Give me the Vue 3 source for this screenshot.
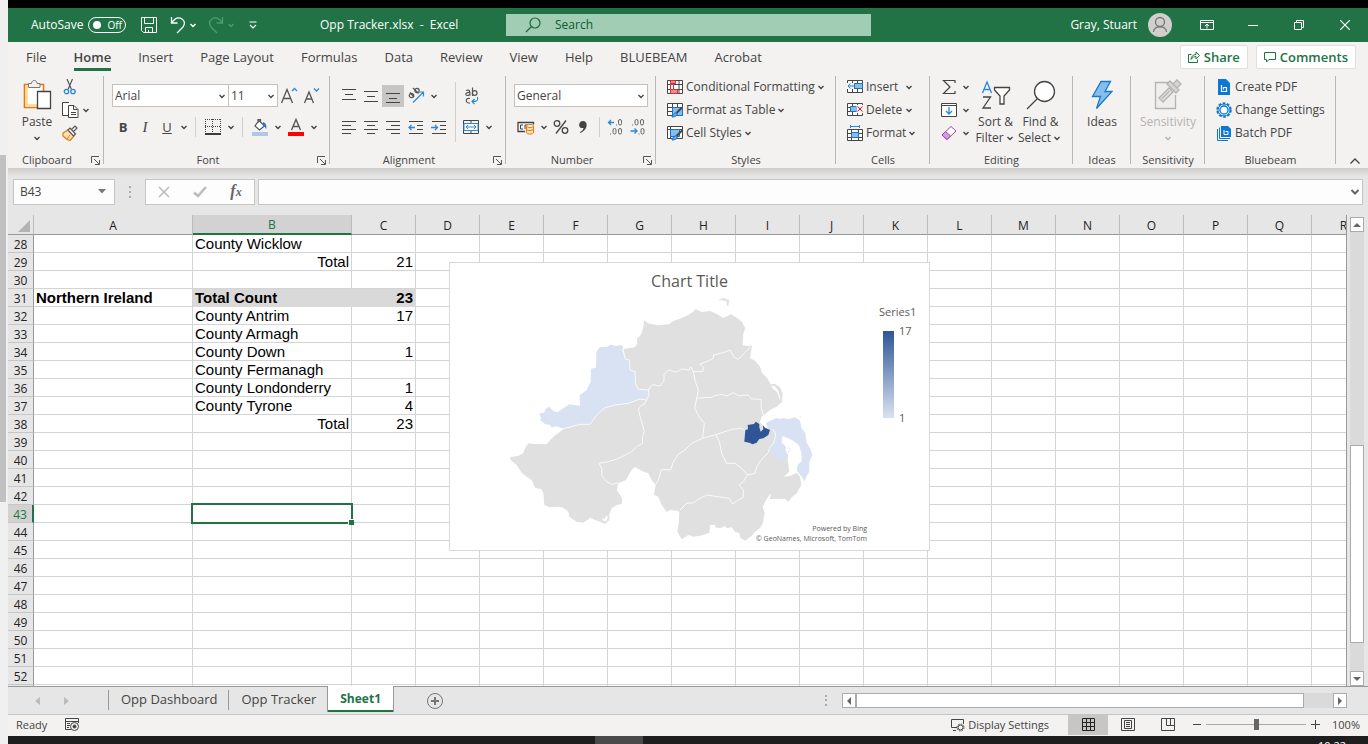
<script setup>
import { h } from 'vue'

const Chev = () =>
  h('svg', { class: 'chev', width: 12, height: 12, viewBox: '0 0 12 12', 'aria-hidden': 'true' }, [
    h('path', { d: 'M3.5 5l2.5 2.5L8.5 5', fill: 'none', stroke: 'currentColor', 'stroke-width': 1.4 })
  ])
const Launcher = () =>
  h('svg', { width: 9, height: 9, viewBox: '0 0 9 9', 'aria-hidden': 'true' }, [
    h('path', { d: 'M.5 7V.5H8M3 3l5 5M8.500 4v4.500H4', fill: 'none', stroke: '#555' })
  ])

const tabs = ['File', 'Home', 'Insert', 'Page Layout', 'Formulas', 'Data', 'Review', 'View', 'Help', 'BLUEBEAM', 'Acrobat']
const cols = 'ABCDEFGHIJKLMNOPQR'.split('')
const cells = {
  28: { B: 'County Wicklow' },
  29: { B: 'Total', C: '21' },
  31: { A: 'Northern Ireland', B: 'Total Count', C: '23' },
  32: { B: 'County Antrim', C: '17' },
  33: { B: 'County Armagh' },
  34: { B: 'County Down', C: '1' },
  35: { B: 'County Fermanagh' },
  36: { B: 'County Londonderry', C: '1' },
  37: { B: 'County Tyrone', C: '4' },
  38: { B: 'Total', C: '23' }
}
const rows = Array.from({ length: 25 }, (_, i) => i + 28)
const cellClass = (r, c) => ({
  bold: r === 31,
  fill: r === 31 && (c === 'B' || c === 'C'),
  right: c === 'C' || (c === 'B' && (r === 29 || r === 38)),
  active: r === 43 && c === 'B'
})
const alignIcons = [
  'M1 1.500h14M4 6.500h8M1 11.500h14',
  'M1 3.500h14M4 8.500h8M1 13.500h14',
  'M1 5.500h14M4 10.500h8M1 14.500h14'
]
const justIcons = [
  'M1 2.500h14M1 6.500h9M1 10.500h14M1 14.500h9',
  'M1 2.500h14M4 6.500h8M1 10.500h14M4 14.500h8',
  'M1 2.500h14M6 6.500h9M1 10.500h14M6 14.500h9'
]
</script>

<template>
  <div class="screen">
    <div class="edge"><div class="edge-thumb"></div></div>
    <div class="desktop">
      <div class="black"></div>
      <header class="title">
        <div class="quick">
          <label class="autosave">AutoSave
            <button class="toggle" type="button"><i></i>Off</button>
          </label>
          <button class="q save" type="button" aria-label="Save">
            <svg width="18" height="18" viewBox="0 0 18 18" fill="none" stroke="#fff"><path d="M1.500 1.500h15v15h-13l-2-2zM4.500 1.500v6h9v-6M5.500 16.500v-5h7v5M8.500 14v2.500" /></svg>
          </button>
          <button class="q" type="button" aria-label="Undo">
            <svg width="16" height="18" viewBox="0 0 16 18" fill="none" stroke="#fff" stroke-width="1.300"><path d="M1.500 1v6h6M1.500 7C5 2 9 1 12 3c3 2 3 5 1 8l-6 6" /></svg>
            <Chev />
          </button>
          <button class="q dim" type="button" aria-label="Redo">
            <svg width="16" height="18" viewBox="0 0 16 18" fill="none" stroke="#4f9a70" stroke-width="1.300"><path d="M14.500 1v6h-6M14.500 7C11 2 7 1 4 3c-3 2-3 5-1 8l6 6" /></svg>
            <Chev />
          </button>
          <button class="q" type="button" aria-label="Customize toolbar">
            <svg width="10" height="8" viewBox="0 0 10 8" fill="none" stroke="#fff" stroke-width="1.200"><path d="M1.500 1h7M2 4l3 3 3-3" /></svg>
          </button>
        </div>
        <div class="doc">Opp Tracker.xlsx&nbsp; - &nbsp;Excel</div>
        <label class="search">
          <svg width="16" height="16" viewBox="0 0 16 16" fill="none" stroke="#1a6a3c" stroke-width="1.200"><circle cx="10" cy="6" r="5" /><path d="M6.500 9.500L1 15" /></svg>
          <input type="text" placeholder="Search" aria-label="Search" />
        </label>
        <div class="user">
          <span>Gray, Stuart</span>
          <svg class="avatar" width="24" height="24" viewBox="0 0 24 24"><circle cx="12" cy="12" r="12" fill="#d0cfce" /><g fill="none" stroke="#777" stroke-width="1.300"><circle cx="12" cy="9" r="4.500" /><path d="M5.500 19c0-7 13-7 13 0" /></g></svg>
          <button class="win" type="button" aria-label="Ribbon display options"><svg width="14" height="12" viewBox="0 0 14 12" fill="none" stroke="#fff"><path d="M.5 1.500h13v9H.5zM.5 3.500h13M7 9.500V5M5 7l2-2 2 2" /></svg></button>
          <button class="win" type="button" aria-label="Minimize"><svg width="10" height="10" viewBox="0 0 10 10" stroke="#fff"><path d="M0 5.500h10" /></svg></button>
          <button class="win" type="button" aria-label="Restore"><svg width="10" height="10" viewBox="0 0 10 10" fill="none" stroke="#fff"><path d="M.5 2.500h7v7h-7zM2.500 2.500v-2h7v7h-2" /></svg></button>
          <button class="win" type="button" aria-label="Close"><svg width="10" height="10" viewBox="0 0 10 10" stroke="#fff" stroke-width="1.200"><path d="M0 0l10 10M10 0L0 10" /></svg></button>
        </div>
      </header>

      <nav class="tabs">
        <a v-for="t in tabs" :key="t" href="#" :class="{ on: t === 'Home' }">{{ t }}</a>
        <div class="tab-actions">
          <button type="button"><svg width="12" height="12" viewBox="0 0 12 12" fill="none" stroke="#217346"><path d="M3.500 3.500h-3v8h9v-3M3 8.500c0-3 2-5 5-5v-2.500l3.500 3.500L8 8V5.500c-2 0-4 1-5 3z" /></svg>Share</button>
          <button type="button"><svg width="12" height="12" viewBox="0 0 12 12" fill="none" stroke="#217346"><path d="M.5 1.500h11v7H5l-2.500 2.500V8.500h-2z" /></svg>Comments</button>
        </div>
      </nav>

      <div class="ribbon">
        <section class="group g-clip">
          <div class="body">
            <button class="big" type="button">
              <span class="ico"><svg width="30" height="32" viewBox="0 0 30 32" fill="none"><path d="M2.500 5.500h19v23h-19z" fill="#fff" stroke="#e07a10" stroke-width="1.600" /><path d="M4.500 7v19.500H15" stroke="#f8d990" stroke-width="2.500" /><path d="M6.500 8.500v-4h3c0-4 5.500-4 5.500 0h3v4z" fill="#f3f2f1" stroke="#777" /><path d="M15.500 12.500h13v17h-13z" fill="#fff" stroke="#444" stroke-width="1.300" /></svg></span>
              <span>Paste</span><span><Chev /></span>
            </button>
            <div class="stack">
              <button type="button" aria-label="Cut"><svg width="16" height="16" viewBox="0 0 16 16" fill="none"><path d="M5 0l4.500 10.500M10.500 0L6 10.500" stroke="#555" stroke-width="1.200" /><circle cx="4.500" cy="12.500" r="2.200" stroke="#2b88d8" stroke-width="1.300" /><circle cx="11" cy="12.500" r="2.200" stroke="#2b88d8" stroke-width="1.300" /></svg></button>
              <button type="button" aria-label="Copy"><svg width="18" height="16" viewBox="0 0 18 16" fill="#fff" stroke="#444"><path d="M7 .5H.5v13H6" /><path d="M6.500 3.500h5.500l4 4v8h-9.500zM11.500 3.500v4h4M9 10.500h5M9 12.500h5" /></svg><Chev /></button>
              <button type="button" aria-label="Format painter"><svg width="16" height="16" viewBox="0 0 16 16" fill="none"><path d="M1 8l5-3 6 6-4 4.500-3-1-4-3.500z" fill="#fbe0b4" stroke="#e07a10" stroke-width="1.200" /><path d="M5 14l3-4" stroke="#e07a10" /><path d="M6 5l2-2 5.500 6-2 2zM9.500 4.500L13 1l2 2-3.500 3.500" fill="#fff" stroke="#555" stroke-width="1.200" /></svg></button>
            </div>
          </div>
          <footer><span>Clipboard</span><button type="button" aria-label="Clipboard settings"><Launcher /></button></footer>
        </section>

        <section class="group g-font">
          <div class="body rows">
            <div class="row">
              <div class="combo face"><input type="text" value="Arial" aria-label="Font" /><Chev /></div>
              <div class="combo size"><input type="text" value="11" aria-label="Font size" /><Chev /></div>
              <button class="b" type="button" aria-label="Increase font size"><svg width="18" height="18" viewBox="0 0 18 18" fill="none" stroke="#555" stroke-width="1.300"><path d="M1.500 16L7 2.500 12.500 16M3.500 11.500h7" /><path d="M12 4l2.500-2.500L17 4" stroke="#2b88d8" /></svg></button>
              <button class="b" type="button" aria-label="Decrease font size"><svg width="18" height="18" viewBox="0 0 18 18" fill="none" stroke="#555" stroke-width="1.300"><path d="M2.500 16L7 5l4.500 11M4 12h6" /><path d="M12 1.500L14.500 4 17 1.500" stroke="#2b88d8" /></svg></button>
            </div>
            <div class="row">
              <button class="b strong" type="button">B</button>
              <button class="b ital" type="button">I</button>
              <button class="b under" type="button">U</button><Chev />
              <i class="sep"></i>
              <button class="b wide" type="button" aria-label="Borders"><svg width="16" height="16" viewBox="0 0 16 16" fill="none" stroke="#444"><path d="M.5 0v14M15.500 0v14M7.500 0v14M0 .5h16M0 7.500h16" stroke-dasharray="1 1" /><path d="M0 15h16" stroke-width="1.500" stroke="#000" /></svg></button><Chev />
              <i class="sep"></i>
              <button class="b wide" type="button" aria-label="Fill color"><svg width="16" height="18" viewBox="0 0 16 18" fill="none"><path d="M7 2.500l5.500 5.500L7.500 12 3 8zM6 5V1.500h2.500V5" fill="#fff" stroke="#555" stroke-width="1.200" /><path d="M11 4c3 1 4 4 3 7-1-1-1-3-3-4z" fill="#2b78c8" /><path d="M0 14h16v4H0z" fill="#b4c6e7" /></svg></button><Chev />
              <button class="b wide" type="button" aria-label="Font color"><svg width="16" height="18" viewBox="0 0 16 18" fill="none"><path d="M3.500 12L8 1.500 12.500 12M5 8.500h6" stroke="#555" stroke-width="1.400" /><path d="M0 14h16v4H0z" fill="#f00" /></svg></button><Chev />
            </div>
          </div>
          <footer><span>Font</span><button type="button" aria-label="Font settings"><Launcher /></button></footer>
        </section>

        <section class="group g-align">
          <div class="body">
            <div class="rows">
              <div class="row">
                <button v-for="(d, i) in alignIcons" :key="d" class="b" :class="{ pressed: i === 2 }" type="button" aria-label="Vertical align"><svg width="16" height="16" viewBox="0 0 16 16" stroke="#444" fill="none"><path :d="d" /></svg></button>
                <button class="b wide" type="button" aria-label="Orientation"><svg width="18" height="18" viewBox="0 0 18 18" fill="none" stroke="#555" stroke-width="1.200"><circle cx="4.500" cy="8.500" r="2.200" /><path d="M3 5.500l4 4.500M6 1l5.500 5.500" /><circle cx="10" cy="3.500" r="2.200" /><path d="M6 15.500L16 5.500M12 5h4.500v4.500" stroke="#2b88d8" /></svg></button><Chev />
              </div>
              <div class="row">
                <button v-for="d in justIcons" :key="d" class="b" type="button" aria-label="Align"><svg width="16" height="16" viewBox="0 0 16 16" stroke="#444" fill="none"><path :d="d" /></svg></button>
                <button class="b wide" type="button" aria-label="Decrease indent"><svg width="16" height="16" viewBox="0 0 16 16" fill="none" stroke="#444"><path d="M1 2.500h14M9 6.500h6M9 10.500h6M1 14.500h14" /><path d="M7 8.500H1M3.500 6L1 8.500 3.500 11" stroke="#2b88d8" stroke-width="1.300" /></svg></button>
                <button class="b" type="button" aria-label="Increase indent"><svg width="16" height="16" viewBox="0 0 16 16" fill="none" stroke="#444"><path d="M1 2.500h14M9 6.500h6M9 10.500h6M1 14.500h14" /><path d="M0 8.500h6M4 6l2.500 2.500L4 11" stroke="#2b88d8" stroke-width="1.300" /></svg></button>
              </div>
            </div>
            <i class="tall"></i>
            <div class="rows">
              <div class="row">
                <button class="b wide" type="button" aria-label="Wrap text"><svg width="16" height="18" viewBox="0 0 16 18" fill="none" stroke="#555" stroke-width="1.200"><path d="M3 3.500c4-1.500 4 .5 4 5M7 5.500c-5-.5-5 3-2.500 3C6 8.500 7 7.500 7 6" /><path d="M9.500 .5v8.500" /><circle cx="11.700" cy="6" r="2.300" /><path d="M7 11.500c-5-1-5 5 0 4.500" /><path d="M14.500 10c1 4-1 4.500-5.500 4.500M11.500 12L9 14.500l2.500 2.500" stroke="#2b88d8" /></svg></button>
              </div>
              <div class="row">
                <button class="b wide" type="button" aria-label="Merge"><svg width="16" height="16" viewBox="0 0 16 16" fill="none" stroke="#444"><path d="M.5 1.500h15v13H.5zM8 1.500v3M8 11.500v3" /><path d="M1 4.500h14v7H1z" fill="#fff" stroke="#2b88d8" /><path d="M3 8h10M5 6L3 8l2 2M11 6l2 2-2 2" stroke="#2b88d8" /></svg></button><Chev />
              </div>
            </div>
          </div>
          <footer><span>Alignment</span><button type="button" aria-label="Alignment settings"><Launcher /></button></footer>
        </section>

        <section class="group g-num">
          <div class="body rows">
            <div class="row"><div class="combo fmt"><input type="text" value="General" aria-label="Number format" /><Chev /></div></div>
            <div class="row">
              <button class="b wide" type="button" aria-label="Accounting format"><svg width="18" height="16" viewBox="0 0 18 16" fill="none" stroke="#444"><path d="M8 12.500H1v-9h15.500v2" stroke-width="1.300" /><path d="M6 6H3.500v4H6M8 10V6h3" /><path d="M9.500 7v6.500c0 2 7 2 7 0V7" fill="#fbe0b4" stroke="#e07a10" /><ellipse cx="13" cy="7" rx="3.500" ry="1.500" fill="#fff" stroke="#e07a10" /><path d="M9.500 10c0 2 7 2 7 0" stroke="#e07a10" /></svg></button><Chev />
              <button class="b" type="button" aria-label="Percent"><svg width="16" height="16" viewBox="0 0 16 16" fill="none" stroke="#444" stroke-width="1.300"><circle cx="4" cy="4.500" r="2.800" /><circle cx="12" cy="11.500" r="2.800" /><path d="M13 1.500L3 14.500" /></svg></button>
              <button class="b" type="button" aria-label="Comma style"><svg width="10" height="14" viewBox="0 0 10 14"><path d="M5 1c5 0 5.500 8-2.500 12l-.5-1c2-1 3.500-2.500 3.500-4C-.5 9 0 1 5 1z" fill="#444" /></svg></button>
              <i class="sep"></i>
              <button class="b" type="button" aria-label="Increase decimal"><svg width="18" height="18" viewBox="0 0 18 18" fill="none" stroke="#666"><path d="M7 4.500H1.500M4 2L1.500 4.500 4 7" stroke="#2b88d8" stroke-width="1.300" /><path d="M9 7h1M3 16h1" /><rect x="11.500" y="1.500" width="3" height="5.500" rx="1.500" /><rect x="6" y="10.500" width="3" height="5.500" rx="1.500" /><rect x="11.500" y="10.500" width="3" height="5.500" rx="1.500" /></svg></button>
              <button class="b" type="button" aria-label="Decrease decimal"><svg width="18" height="18" viewBox="0 0 18 18" fill="none" stroke="#666"><path d="M1.500 13H8M5.500 10.500L8 13l-2.500 2.500" stroke="#2b88d8" stroke-width="1.300" /><path d="M3 7h1M9.500 16h1" /><rect x="6" y="1.500" width="3" height="5.500" rx="1.500" /><rect x="11.500" y="1.500" width="3" height="5.500" rx="1.500" /><rect x="12" y="10.500" width="3" height="5.500" rx="1.500" /></svg></button>
            </div>
          </div>
          <footer><span>Number</span><button type="button" aria-label="Number settings"><Launcher /></button></footer>
        </section>

        <section class="group g-styles">
          <div class="body pad">
            <div class="stack">
              <button type="button"><svg width="16" height="16" viewBox="0 0 16 16" fill="#fff" stroke="#444"><path d="M.5 1.500h15v13H.5zM.5 5.500h15M.5 10.500h15M4 1.500v13M12 1.500v13" /><path d="M3.500 1.500h5v3h-5zM3.500 10.500h7v4h-7z" fill="#f6878c" stroke="#d13438" /><path d="M3.500 5.500h3v5h-3z" fill="#fff" stroke="#d13438" /></svg>Conditional Formatting<Chev /></button>
              <button type="button"><svg width="16" height="16" viewBox="0 0 16 16" fill="#fff" stroke="#444"><path d="M.5 1.500h15v12H.5zM.5 5.500h15M.5 9.500h15M5.500 1.500v12M10.500 1.500v12" /><path d="M5.500 5.500h10v8h-10z" fill="#83beec" stroke="#1e6fbf" /><path d="M15 5.500L9.500 11" stroke-width="2" /><path d="M5 15c1-3 3-5 5-4 1 2-1 4-5 4z" fill="#5ba7e6" stroke="#1e6fbf" /></svg>Format as Table<Chev /></button>
              <button type="button"><svg width="16" height="16" viewBox="0 0 16 16" fill="#fff" stroke="#444"><path d="M.5 1.500h15v12H.5zM.5 4.500h15M3.500 1.500v12" /><path d="M3.500 4.500h9v7h-9z" fill="#83beec" stroke="#1e6fbf" /><path d="M15 5.500L9.500 11" stroke-width="2" /><path d="M5 15c1-3 3-5 5-4 1 2-1 4-5 4z" fill="#5ba7e6" stroke="#1e6fbf" /></svg>Cell Styles<Chev /></button>
            </div>
          </div>
          <footer><span>Styles</span></footer>
        </section>

        <section class="group g-cells">
          <div class="body pad">
            <div class="stack">
              <button type="button"><svg width="16" height="16" viewBox="0 0 16 16" fill="#fff" stroke="#444"><path d="M.5 1.500h15v12H.5zM.5 5.500h15M.5 9.500h15M5.500 1.500v12M10.500 1.500v12" /><path d="M7.500 4.500h8v5h-8z" fill="#83beec" stroke="#1e6fbf" /><path d="M0 4h7v6H0z" fill="#f3f2f1" stroke="none" /><path d="M7 7H1M3.500 4.500L1 7l2.500 2.500" stroke="#2b88d8" fill="none" /></svg><span>Insert</span><Chev /></button>
              <button type="button"><svg width="16" height="16" viewBox="0 0 16 16" fill="#fff" stroke="#444"><path d="M.5 1.500h15v12H.5zM.5 5.500h15M.5 9.500h15M5.500 1.500v12M10.500 1.500v12" /><path d="M3.500 4.500h6v5h-6z" fill="#83beec" stroke="#1e6fbf" /><path d="M9.500 3H16v8H9.500z" fill="#f3f2f1" stroke="none" /><path d="M10.500 4.500l5 5M15.500 4.500l-5 5" stroke="#e81123" fill="none" /></svg><span>Delete</span><Chev /></button>
              <button type="button"><svg width="16" height="16" viewBox="0 0 16 16" fill="#fff" stroke="#444"><path d="M.5 4.500h15v11H.5zM.5 8.500h15M.5 12.500h15M4.500 4.500v11M11.500 4.500v11" /><path d="M4.500 7.500h7v5h-7z" fill="#83beec" stroke="#1e6fbf" /><path d="M3.500 1.500h9M3.500 0v3M12.500 0v3" stroke="#2b88d8" /></svg><span>Format</span><Chev /></button>
            </div>
          </div>
          <footer><span>Cells</span></footer>
        </section>

        <section class="group g-edit">
          <div class="body pad">
            <div class="stack tools">
              <button type="button" aria-label="Sum"><svg width="16" height="16" viewBox="0 0 16 16" fill="none" stroke="#444" stroke-width="1.200"><path d="M14 4V1.500H2.500L9 8l-6.500 6.500H14V12" /></svg><Chev /></button>
              <button type="button" aria-label="Fill"><svg width="16" height="16" viewBox="0 0 16 16" fill="#fff" stroke="#444"><path d="M.5 1.500h15v13H.5zM.5 3.500h15" /><path d="M8 5v7M5 9l3 3 3-3" stroke="#2b88d8" stroke-width="1.300" fill="none" /></svg><Chev /></button>
              <button type="button" aria-label="Clear"><svg width="16" height="16" viewBox="0 0 16 16" fill="#fff" stroke="#a33fb0"><path d="M1 10L10 1.500l5 4.500-9 8.500z" /><path d="M1 10l3.500-3.500 5 4.500L6 14.500z" fill="#d59ddc" /></svg><Chev /></button>
            </div>
            <button class="big mid" type="button">
              <span class="ico"><svg width="30" height="30" viewBox="0 0 30 30" fill="none" stroke="#444" stroke-width="1.300"><path d="M1.500 13L6 2l4.500 11M3 9.500h6" stroke="#2b88d8" /><path d="M2 17h7.500L2 28h8" /><path d="M13.500 7.500h15v2.500L23 16v8h-4v-8l-5.500-6z" fill="#fff" /></svg></span>
              <span>Sort &amp;</span><span>Filter<Chev /></span>
            </button>
            <button class="big mid" type="button">
              <span class="ico"><svg width="30" height="30" viewBox="0 0 30 30" fill="#fff" stroke="#444" stroke-width="1.300"><circle cx="18.500" cy="11.500" r="10" /><path d="M11.500 18.500L1 29" /></svg></span>
              <span>Find &amp;</span><span>Select<Chev /></span>
            </button>
          </div>
          <footer><span>Editing</span></footer>
        </section>

        <section class="group g-ideas">
          <div class="body center">
            <button class="big" type="button"><span class="ico"><svg width="22" height="30" viewBox="0 0 22 30"><path d="M10 1.500h9.500L14 11.500h7L5.500 28.500 9.500 16.500h-8z" fill="#83beec" stroke="#1e78c8" stroke-width="1.300" /></svg></span><span>Ideas</span></button>
          </div>
          <footer><span>Ideas</span></footer>
        </section>

        <section class="group g-sens">
          <div class="body center">
            <button class="big off" type="button" disabled><span class="ico"><svg width="28" height="32" viewBox="0 0 28 32" fill="none" stroke="#b5b3b1" stroke-width="1.300"><path d="M16 3.500H1.500v26h20V16" fill="#efeeee" /><path d="M5 19l10-10 4 4L9 23zM8 19.500l7.500-7.500" fill="#e1e0df" /><path d="M13 5l3-3 9 9-3 3zM19 5l4-4 4 4-4 4" fill="#d5d4d3" /></svg></span><span>Sensitivity</span><span><Chev /></span></button>
          </div>
          <footer><span>Sensitivity</span></footer>
        </section>

        <section class="group g-blue">
          <div class="body pad">
            <div class="stack">
              <button type="button"><svg width="16" height="16" viewBox="0 0 16 16"><path d="M2 0h8l4 4v12H2z" fill="#0a78d4" /><path d="M5.500 6v6.500h5V8.500h-3v2" fill="none" stroke="#fff" stroke-width="1.200" /></svg>Create PDF</button>
              <button type="button"><svg width="16" height="16" viewBox="0 0 16 16" fill="none" stroke="#0a78d4"><circle cx="8" cy="8" r="6.500" stroke-width="2.500" stroke-dasharray="2.600 1.480" /><circle cx="8" cy="8" r="6" fill="#d6eafa" /><circle cx="8" cy="8" r="4" fill="#fff" stroke-width="1.300" /></svg>Change Settings</button>
              <button type="button"><svg width="16" height="16" viewBox="0 0 16 16"><path d="M5 1h7l3 3v8H5z" fill="#0a78d4" /><path d="M1.500 4v11.500H12M3.500 2.500v11H14" fill="none" stroke="#0a78d4" /><path d="M8 5v4.500h4V6.500H9.500" fill="none" stroke="#fff" /></svg>Batch PDF</button>
            </div>
          </div>
          <footer><span>Bluebeam</span></footer>
        </section>
        <button class="collapse" type="button" aria-label="Collapse ribbon"><svg width="12" height="8" viewBox="0 0 12 8" fill="none" stroke="#444" stroke-width="1.300"><path d="M1.500 6.500L6 2l4.500 4.500" /></svg></button>
      </div>

      <div class="formula">
        <div class="namebox"><input type="text" value="B43" aria-label="Name box" /><svg width="8" height="5" viewBox="0 0 8 5"><path d="M0 0h8L4 4.500z" fill="#777" /></svg></div>
        <svg class="dots" width="2" height="12" viewBox="0 0 2 12" fill="#a8a8a8"><path d="M0 0h2v2H0zM0 5h2v2H0zM0 10h2v2H0z" /></svg>
        <div class="fx">
          <button type="button" aria-label="Cancel"><svg width="12" height="12" viewBox="0 0 12 12" stroke="#bbb" stroke-width="1.500"><path d="M1 1l10 10M11 1L1 11" /></svg></button>
          <button type="button" aria-label="Enter"><svg width="14" height="12" viewBox="0 0 14 12" fill="none" stroke="#bbb" stroke-width="2.500"><path d="M1 6.500L5 10l8-9" /></svg></button>
          <button class="fn" type="button">f<small>x</small></button>
        </div>
        <div class="finput"><input type="text" aria-label="Formula" /><svg width="8" height="6" viewBox="0 0 8 6" fill="none" stroke="#666" stroke-width="2"><path d="M.5 1L4 4.500 7.500 1" /></svg></div>
      </div>

      <div class="work">
        <div class="sheet">
          <table>
            <colgroup><col class="c-num" /><col class="c-wide" /><col class="c-wide" /><col v-for="n in 16" :key="n" class="c-std" /></colgroup>
            <thead>
              <tr>
                <th class="corner"><svg width="12" height="12" viewBox="0 0 12 12"><path d="M12 0v12H0z" fill="#b4b4b4" /></svg></th>
                <th v-for="c in cols" :key="c" :class="{ sel: c === 'B' }">{{ c }}</th>
              </tr>
            </thead>
            <tbody>
              <tr v-for="r in rows" :key="r">
                <th :class="{ sel: r === 43 }">{{ r }}</th>
                <td v-for="c in cols" :key="c" :class="cellClass(r, c)">{{ cells[r]?.[c] }}</td>
              </tr>
              <tr><th></th><td v-for="c in cols" :key="c"></td></tr>
            </tbody>
          </table>
          <figure class="chart">
            <figcaption>Chart Title</figcaption>
            <svg class="map" width="330" height="252" viewBox="0 0 990 756">
              <path d="M654 31L662 27 672 24 680 28 688 29 685 48 680 46 680 34 668 31z" fill="#e0e0e0" />
              <path d="M370 177L405 172 412 160 411 145 420 138 425 130 430 110 432 91 445 100 470 106 507 103 520 93 545 84 560 77 575 68 587 58 605 66 630 63 650 72 670 84 693 73 708 82 726 95 736 115 730 130 728 165 742 168 756 167 750 205 765 212 780 230 787 250 802 265 812 283 825 281 840 292 848 310 846 335 830 350 810 360 785 380 780 395 790 415 820 418 840 460 862 500 868 545 852 560 870 558 890 548 900 560 904 585 890 610 875 622 865 636 855 626 810 627 812 610 798 630 788 650 794 670 788 700 780 715 765 725 755 738 735 752 720 742 718 730 705 725 695 712 680 715 675 708 660 715 645 712 645 705 630 705 628 728 610 735 595 738 580 740 565 735 545 748 532 725 536 700 538 665 530 662 510 660 500 666 485 645 475 620 462 615 467 585 455 570 445 550 425 542 405 531 395 540 378 570 355 580 350 600 360 615 367 628 365 642 350 645 335 655 328 672 328 690 315 702 300 695 285 690 270 683 262 690 250 698 230 695 208 680 205 665 190 653 175 650 150 652 133 645 130 610 125 598 105 593 95 570 80 560 65 548 50 525 32 510 30 502 55 497 70 490 75 475 85 460 100 462 140 462 160 440 190 418 270 380 400 300z" fill="#e0e0e0" />
              <path d="M815 288L825 290 835 305 840 328 832 305 820 297z" fill="#fff" stroke="#fff" stroke-width="2" />
              <path d="M321 675l-8 12-8-2 6 8h8l4-10z" fill="#fff" />
              <path d="M370 168L360 165 350 168 330 164 322 170 300 171 289 187 288 233 273 236 272 275 260 300 239 316 240 347 208 343 190 355 172 367 160 363 147 350 137 357 132 368 118 370 123 384 120 390 135 402 150 405 154 412 170 409 190 416 240 403 270 403 290 375 315 353 345 345 385 340 420 327 440 330 447 315 445 300 415 298 407 280 405 245 390 240 388 210 376 207 367 180z" fill="#d9e2f3" />
              <path d="M798 400L810 392 830 384 840 387 850 384 865 388 885 382 900 392 904 412 916 430 920 458 930 475 937 495 928 517 928 545 920 558 913 575 905 560 890 541 893 525 905 513 904 490 897 466 880 452 848 437 845 458 858 470 856 480 865 497 860 508 842 510 825 500 808 488 808 475 820 460 827 435 820 418 805 418z" fill="#d9e2f3" />
              <path d="M860 474L868 474 871 482 864 486M899 379l6 5" fill="none" stroke="#d9e2f3" stroke-width="2" />
              <g fill="none" stroke="#fafafa" stroke-width="3" stroke-linejoin="round">
                <path d="M190 416L240 403 270 403 290 375 315 353 345 345 385 340 420 327 440 330 447 315 445 300M368 180L376 207 388 210 390 240 405 245 407 280 415 298 445 300 457 284 480 288 492 272 492 254 505 240 530 246 545 237 568 240 572 230 580 245 608 245 610 232 600 222 625 213 640 205 640 195 670 188 690 180 702 202 715 208 752 170" />
                <path d="M580 245L586 275 595 300 590 325 584 355 600 385 613 400 608 445M590 325L620 322 635 323 645 317 665 313 680 318 700 308 715 317 745 315 755 327 783 328 784 355 790 375" />
                <path d="M440 330L435 340 420 350 415 360 422 385 433 425 427 440 428 460 410 470 395 485 370 498 350 507 325 515 297 520 305 535 305 557 320 575 335 583 355 578" />
                <path d="M467 582L475 570 485 538 512 540 520 515 535 493 555 480 575 460 608 445 648 434 695 418 725 415 735 422" />
                <path d="M648 435L658 455 665 490 680 520 705 520 725 535 742 555 765 550 770 530 785 508 805 488 808 475 820 460 827 435 820 418M742 555L730 575 717 585 730 600 730 622 715 630 698 642 688 625 640 618 620 615 600 625 580 638 560 640 540 660" />
              </g>
              <path d="M733 455L736 420 744 418 743 405 762 402 767 395 778 402 778 412 782 425 790 418 788 405 795 413 810 420 805 435 790 445 778 447 770 458 758 463 748 458z" fill="#2f5597" />
            </svg>
            <div class="legend"><span>Series1</span><div class="ramp"><i></i><div><span>17</span><span>1</span></div></div></div>
            <p>Powered by Bing<br />© GeoNames, Microsoft, TomTom</p>
          </figure>
        </div>
        <div class="vbar">
          <button type="button" aria-label="Scroll up"><svg width="8" height="4" viewBox="0 0 8 4"><path d="M0 4h8L4 0z" fill="#666" /></svg></button>
          <div class="vtrack"><i></i></div>
          <button type="button" aria-label="Scroll down"><svg width="8" height="4" viewBox="0 0 8 4"><path d="M0 0h8L4 4z" fill="#666" /></svg></button>
        </div>
      </div>

      <div class="sheets">
        <div class="arrows">
          <svg width="5" height="8" viewBox="0 0 5 8"><path d="M5 0v8L0 4z" fill="#bbb" /></svg>
          <svg width="5" height="8" viewBox="0 0 5 8"><path d="M0 0v8l5-4z" fill="#bbb" /></svg>
        </div>
        <button class="stab" type="button">Opp Dashboard</button>
        <button class="stab" type="button">Opp Tracker</button>
        <button class="stab cur" type="button">Sheet1</button>
        <button class="add" type="button" aria-label="New sheet"><svg width="16" height="16" viewBox="0 0 16 16" fill="none" stroke="#777"><circle cx="8" cy="8" r="7.500" /><path d="M4 8h8M8 4v8" stroke-width="2" /></svg></button>
        <div class="hbar">
          <svg class="hdots" width="2" height="11" viewBox="0 0 2 11" fill="#aaa"><path d="M0 0h2v2H0zM0 4h2v2H0zM0 9h2v2H0z" /></svg>
          <button type="button" aria-label="Scroll left"><svg width="4" height="8" viewBox="0 0 4 8"><path d="M4 0v8L0 4z" fill="#666" /></svg></button>
          <div class="htrack"><i></i></div>
          <button type="button" aria-label="Scroll right"><svg width="4" height="8" viewBox="0 0 4 8"><path d="M0 0v8l4-4z" fill="#666" /></svg></button>
        </div>
      </div>

      <div class="status">
        <span>Ready</span>
        <svg width="15" height="14" viewBox="0 0 15 14" fill="none" stroke="#444"><path d="M6 11.500H.5V.5h13V5M.5 3.500h13M2 5.500h3M2 7.500h3M2 9.500h2" /><circle cx="9.500" cy="8.500" r="4" /><circle cx="9.500" cy="8.500" r="1.500" fill="#444" /></svg>
        <div class="views">
          <button class="disp" type="button"><svg width="14" height="14" viewBox="0 0 14 14" fill="none" stroke="#444"><path d="M6 9.500H.5v-8h12V6M2 12.500h3" /><circle cx="9.500" cy="9.500" r="2.500" /><circle cx="9.500" cy="9.500" r="3.500" stroke-dasharray="1.500 1.250" /></svg>Display Settings</button>
          <button class="v pressed" type="button" aria-label="Normal"><svg width="13" height="13" viewBox="0 0 13 13" fill="none" stroke="#222"><path d="M.5 .5h12v12H.5zM.5 4.500h12M.5 8.500h12M4.500 .5v12M8.500 .5v12" /></svg></button>
          <button class="v" type="button" aria-label="Page layout"><svg width="14" height="13" viewBox="0 0 14 13" fill="none" stroke="#444"><path d="M.5 .5h13v12H.5zM3.500 2.500h7v8h-7zM5 4.500h4M5 6.500h4M5 8.500h4" /></svg></button>
          <button class="v" type="button" aria-label="Page break preview"><svg width="14" height="13" viewBox="0 0 14 13" fill="none" stroke="#444"><path d="M.5 .5h13v12H.5zM5.500 .5v7h8M9.500 .5v7" /></svg></button>
          <button class="z" type="button" aria-label="Zoom out"><svg width="8" height="9" viewBox="0 0 8 9" stroke="#444"><path d="M0 4.500h8" /></svg></button>
          <input type="range" min="0" max="100" value="50" aria-label="Zoom" />
          <button class="z" type="button" aria-label="Zoom in"><svg width="9" height="9" viewBox="0 0 9 9" stroke="#444"><path d="M0 4.500h9M4.500 0v9" /></svg></button>
          <span class="pct">100%</span>
        </div>
      </div>
      <div class="taskbar"><i></i><span>10:22</span></div>
    </div>
  </div>
</template>

<style>
html, body { margin: 0; overflow: hidden; }
</style>

<style scoped>
.screen, .screen * { box-sizing: border-box; }
.screen { display: flex; height: 100vh; background: #f0f0f0; color: #444; font: 12px/16px "Open Sans", "Noto Sans", sans-serif; overflow: hidden; }
svg { display: block; flex: none; }
button { border: 0; padding: 0; margin: 0; background: none; font: inherit; color: inherit; }
input { border: 0; padding: 0; margin: 0; background: none; font: inherit; color: inherit; min-width: 0; outline: 0; }
.edge { width: 8px; flex: none; padding-top: 155px; }
.edge-thumb { width: 6px; height: 347px; background: #c1c1c1; }
.desktop { flex: 1; min-width: 0; display: flex; flex-direction: column; }
.black { height: 8px; background: #000; flex: none; }

.title { display: grid; grid-template-columns: 312px 186px minmax(120px, 365px) 1fr; align-items: center; height: 34px; flex: none; background: #217346; color: #fff; }
.quick { display: flex; align-items: center; padding-left: 23px; }
.autosave { display: flex; align-items: center; gap: 5px; width: 109px; }
.toggle { display: flex; flex: none; align-items: center; gap: 6px; width: 38px; height: 16px; padding-left: 4px; border: 1px solid #fff; border-radius: 8px; font-size: 10px; line-height: 14px; }
.toggle i { width: 8px; height: 8px; flex: none; border-radius: 4px; background: #fff; }
.q { display: flex; align-items: center; width: 38px; gap: 1px; }
.save { width: 30px; }
.dim { color: #4f9a70; width: 40px; }
.doc { text-align: left; white-space: nowrap; }
.search { display: flex; align-items: center; gap: 14px; height: 22px; padding-left: 19px; background: #a0cdb4; color: #0e5c2f; }
.search input { flex: 1; }
.search input::placeholder { color: #0e5c2f; opacity: 1; }
.user { display: flex; align-items: center; justify-content: flex-end; white-space: nowrap; }
.avatar { margin: 0 12px 0 11px; }
.win { width: 46px; height: 32px; display: grid; place-items: center; }

.tabs { display: flex; align-items: center; gap: 27px; height: 30px; flex: none; padding: 0 12px 0 18px; background: #f3f2f1; font-size: 13px; }
.tabs a { color: #444; text-decoration: none; white-space: nowrap; height: 28px; line-height: 28px; border-bottom: 3px solid transparent; }
.tabs a.on { font-weight: 600; border-color: #217346; }
.tab-actions { margin-left: auto; display: flex; gap: 8px; }
.tab-actions button { display: flex; align-items: center; gap: 4px; height: 24px; padding: 0 7px; background: #fff; border: 1px solid #e1dfdd; border-radius: 2px; color: #217346; font-weight: 600; }

.ribbon { display: flex; height: 96px; flex: none; padding-top: 4px; background: #f3f2f1; }
.group { display: flex; flex-direction: column; height: 92px; background: linear-gradient(#b9b7b5, #b9b7b5) right top / 1px 88px no-repeat; flex: none; }
.g-clip { width: 96px; } .g-font { width: 226px; } .g-align { width: 176px; } .g-num { width: 150px; }
.g-styles { width: 180px; } .g-cells { width: 94px; } .g-edit { width: 143px; } .g-ideas { width: 58px; }
.g-sens { width: 74px; } .g-blue { width: 131px; }
.group footer { display: flex; align-items: center; height: 16px; font-size: 11px; }
.group footer span { flex: 1; text-align: center; }
.group footer button { width: 18px; display: flex; justify-content: flex-end; padding-right: 4px; }
.body { display: flex; height: 76px; white-space: nowrap; }
.g-clip .body { padding-left: 4px; }
.g-font .body, .g-align .body, .g-num .body { padding-left: 8px; }
.pad { padding-left: 11px; }
.center { justify-content: center; }
.rows { display: flex; flex-direction: column; gap: 8px; padding-top: 8px; }
.row { display: flex; align-items: center; height: 23px; }
.stack { display: flex; flex-direction: column; gap: 1px; }
.stack button { display: flex; align-items: center; gap: 3px; height: 22px; }
.stack .chev { margin-left: -3px; }
.tools { width: 32px; }
.tools .chev { margin-left: 0; }
.g-cells .stack span { min-width: 37px; text-align: left; }
.big { display: flex; flex-direction: column; align-items: center; width: 50px; height: 72px; }
.big span { display: flex; align-items: center; min-height: 16px; }
.big .ico { height: 38px; }
.mid { width: 45px; }
.off { color: #b5b3b1; width: auto; }
.b { width: 22px; height: 22px; display: grid; place-items: center; }
.b.wide { width: 24px; }
.pressed { background: #c8c6c4; }
.strong { font-weight: 700; font-size: 13px; }
.ital { font: italic 15px/16px "Liberation Serif", serif; }
.under { text-decoration: underline; font-size: 13px; }
.sep { width: 1px; height: 20px; margin: 0 5px; background: #d2d0ce; }
.tall { width: 1px; height: 60px; margin: 6px 3px; background: #d2d0ce; }
.g-align .rows:first-child { width: 114px; }
.combo { display: flex; align-items: center; height: 23px; background: #fff; border: 1px solid #c3c1bf; padding-left: 2px; }
.combo input { flex: 1; width: 0; }
.face { width: 117px; } .size { width: 49px; border-left: 0; } .fmt { width: 134px; }
.collapse { margin: auto 0 0 auto; width: 27px; height: 14px; display: grid; place-items: center; }

.formula { display: flex; align-items: center; height: 47px; flex: none; padding: 0 5px; background: linear-gradient(#cfcdcb, #e6e6e6 9px); }
.namebox, .fx, .finput { display: flex; align-items: center; height: 26px; background: #fdfdfd; border: 1px solid #c6c6c6; }
.namebox { width: 102px; padding: 0 8px 0 6px; }
.namebox input { flex: 1; width: 0; }
.dots { margin: 0 14px; }
.fx { width: 110px; margin-right: 3px; }
.fx button { flex: 1; display: grid; place-items: center; }
.fx .fn { display: block; font: italic 16px/20px "Liberation Serif", serif; font-weight: 700; color: #666; }
.fn small { font-size: 12px; }
.finput { flex: 1; padding-right: 3px; }
.finput input { flex: 1; }

.work { display: flex; flex: 1; min-height: 0; background: #e6e6e6; }
.sheet { position: relative; flex: 1; min-width: 0; overflow: hidden; border-right: 1px solid #999; }
table { table-layout: fixed; border-collapse: separate; border-spacing: 0; width: 1368px; background: #fff; }
.c-num { width: 26px; } .c-wide { width: 159px; } .c-std { width: 64px; }
th { height: 18px; padding: 2px 0 0; font-weight: 400; font-size: 12px; line-height: 15px; color: #222; background: #e6e6e6; border-right: 1px solid #999; border-bottom: 1px solid #c6c6c6; overflow: hidden; }
thead th { height: 20px; padding-top: 1px; border-bottom-color: #999; border-right-color: #bcbcbc; }
th.sel { background: #d2d2d2; color: #217346; }
thead th.sel { border-bottom: 2px solid #217346; }
tbody th.sel { border-right: 2px solid #217346; }
.corner svg { margin: 2px 0 0 10px; }
td { height: 18px; padding: 0 2px; border-right: 1px solid #d4d4d4; border-bottom: 1px solid #d4d4d4; font: 15px/17px "Liberation Sans", Arial, sans-serif; color: #000; white-space: nowrap; }
.right { text-align: right; }
.bold { font-weight: 700; }
.fill { background: #d9d9d9; border-color: #d9d9d9; }
.active { position: relative; }
.active::before { content: ""; position: absolute; inset: -2px; border: 2px solid #217346; }
.active::after { content: ""; position: absolute; right: -3px; bottom: -3px; width: 5px; height: 5px; background: #217346; border: 1px solid #fff; border-width: 1px 0 0 1px; }

.chart { position: absolute; left: 441px; top: 47px; width: 481px; height: 289px; margin: 0; background: #fff; border: 1px solid #d9d9d9; color: #595959; }
.chart figcaption { text-align: center; font: 16px/22px "Open Sans", sans-serif; padding-top: 7px; }
.map { position: absolute; left: 50px; top: 27px; }
.legend { position: absolute; left: 429px; top: 41px; font-size: 11px; }
.ramp { display: flex; gap: 5px; padding-left: 4px; }
.ramp i { width: 11px; height: 87px; margin-top: 11px; background: linear-gradient(#2f5597, #d9e2f3); }
.ramp div { display: flex; flex-direction: column; justify-content: space-between; height: 106px; padding-top: 3px; }
.chart p { position: absolute; right: 62px; bottom: 6px; margin: 0; text-align: right; font: 7px/10px "Open Sans", sans-serif; }

.vbar { width: 21px; flex: none; display: flex; flex-direction: column; padding: 2px 4px 0 3px; }
.vbar button, .hbar button { width: 14px; height: 15px; flex: none; display: grid; place-items: center; background: #fff; border: 1px solid #ababab; }
.vtrack { flex: 1; background: #dadada; }
.vtrack i { display: block; height: 45%; margin-top: 213px; background: #fff; border: 1px solid #ababab; }

.sheets { display: flex; height: 29px; flex: none; border-top: 1px solid #999; border-bottom: 1px solid #c6c6c6; background: #e6e6e6; font-size: 13px; }
.arrows { display: flex; align-items: center; gap: 24px; width: 100px; padding-left: 27px; }
.stab { height: 20px; margin-top: 3px; padding: 0 11px 2px 12px; border-left: 1px solid #999; white-space: nowrap; }
.stab.cur { margin-top: -1px; height: 26px; padding: 0 12px; background: #fff; border: solid #999; border-width: 0 1px; box-shadow: inset 0 -2px #217346; color: #217346; font-weight: 700; font-size: 12px; }
.add { padding-left: 33px; }
.hbar { flex: 1; display: flex; align-items: center; justify-content: flex-end; padding: 0 21px 0 0; }
.hdots { margin-right: 15px; }
.htrack { flex: 0 1 477px; height: 15px; background: #dadada; }
.htrack i { display: block; width: 94%; height: 15px; background: #fff; border: 1px solid #ababab; }

.status { display: flex; align-items: center; gap: 18px; height: 21px; flex: none; padding: 0 8px 2px; background: #f3f2f1; font-size: 11px; }
.views { margin-left: auto; display: flex; align-items: center; }
.disp { display: flex; align-items: center; gap: 3px; margin-right: 19px; }
.v { width: 40px; height: 21px; display: grid; place-items: center; }
.z { width: 18px; height: 20px; display: grid; place-items: center; }
.views input { appearance: none; width: 100px; height: 12px; background: linear-gradient(#a8a8a8, #a8a8a8) center / 100% 1px no-repeat; }
.views input::-webkit-slider-thumb { appearance: none; width: 5px; height: 11px; background: #666; }
.pct { width: 36px; text-align: right; }
.taskbar { display: flex; justify-content: space-between; height: 8px; flex: none; overflow: hidden; background: #1e1e1e; color: #fff; padding-right: 22px; }
.taskbar i { width: 48px; height: 8px; margin-left: 587px; background: #4a4a4a; }
.taskbar span { font-size: 11px; line-height: 16px; padding-top: 2px; }
</style>
